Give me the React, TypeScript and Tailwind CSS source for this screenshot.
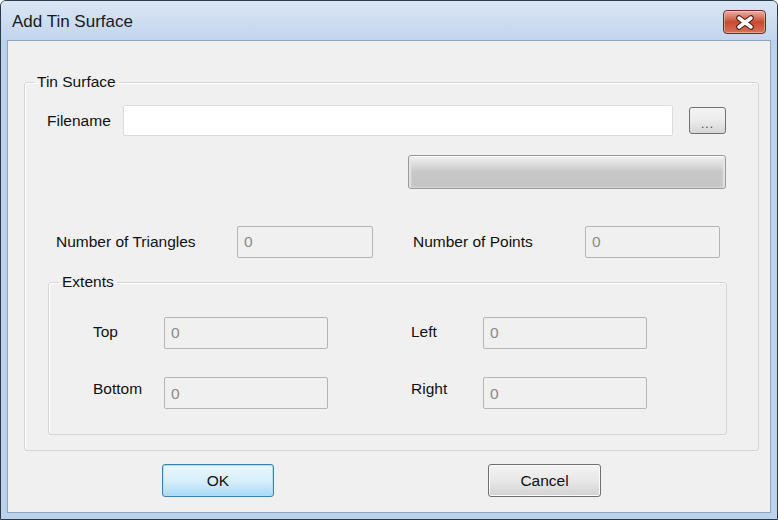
import React from 'react';

const font = { fontFamily: '"Liberation Sans", Arial, sans-serif' };

function ReadOnlyBox({ w }: { w: string }) {
  return (
    <div className={`${w} h-[32px] border border-[#b5b5b5] rounded-[2px] bg-[#f0f0f0] flex items-center pl-[6px] text-[#8a8a8a]`}>
      0
    </div>
  );
}

function CloseButton() {
  return (
    <div className="w-[43px] h-[24px] rounded-[4px] border border-[#6e2a20] bg-gradient-to-b from-[#e8b0a4] via-[#c9482f] to-[#d9735a] flex items-center justify-center shadow-[inset_0_0_0_1px_rgba(255,255,255,0.35)]">
      <svg width="20" height="15" viewBox="0 0 20 15">
        <path d="M4 3 L16 12 M16 3 L4 12" stroke="#4a1a14" strokeWidth="5.5" strokeLinecap="round" />
        <path d="M4 3 L16 12 M16 3 L4 12" stroke="#ffffff" strokeWidth="3.5" strokeLinecap="round" />
      </svg>
    </div>
  );
}

export default function App() {
  return (
    <div style={font} className="w-[778px] h-[520px] bg-[#bcd3ec] border border-[#2b3a4a] rounded-t-[6px] flex flex-col text-[15.5px] text-[#111] overflow-hidden">
      {/* title bar */}
      <div className="h-[39px] flex items-center justify-between pl-[11px] pr-[11px] bg-gradient-to-b from-[#dae6f4] to-[#c2d5ed]">
        <span className="text-[17px] text-[#1a1a1a] mt-[2px]">Add Tin Surface</span>
        <div className="mt-[3px]">
          <CloseButton />
        </div>
      </div>

      {/* client area */}
      <div className="flex-1 mx-[6px] mb-[6px] bg-[#f0f0f0] border border-[#8ba7c4] flex flex-col">
        <fieldset className="mt-[32px] ml-[16px] mr-[11px] border border-[#d5d5d5] rounded-[3px] pb-[15px] shadow-[inset_1px_1px_0_#ffffff]">
          <legend className="ml-[9px] px-[3px] leading-[18px]">Tin Surface</legend>

          <div className="flex items-center mt-[14px] pl-[22px]">
            <span className="w-[76px]">Filename</span>
            <div className="w-[550px] h-[31px] bg-white border border-[#dcdcdc] rounded-[2px]" />
            <div className="ml-[16px] w-[37px] h-[27px] rounded-[3px] border border-[#707070] bg-gradient-to-b from-[#f4f4f4] via-[#ebebeb] to-[#d6d6d6] flex items-end justify-center pb-[3px] text-[12px] leading-none tracking-[1px] text-[#444]">
              ...
            </div>
          </div>

          <div className="mt-[19px] ml-[383px] w-[318px] h-[34px] rounded-[3px] border border-[#9a9a9a] bg-gradient-to-b from-[#f2f2f2] via-[#c8c8c8] to-[#c4c4c4] shadow-[inset_0_1px_0_#ffffff,inset_2px_0_2px_#e6e6e6,inset_-2px_0_2px_#e6e6e6]" />

          <div className="flex items-center mt-[37px] pl-[31px]">
            <span className="w-[181px]">Number of Triangles</span>
            <ReadOnlyBox w="w-[136px]" />
            <span className="ml-[40px] w-[172px]">Number of Points</span>
            <ReadOnlyBox w="w-[135px]" />
          </div>

          <fieldset className="mt-[15px] ml-[23px] w-[679px] border border-[#d5d5d5] rounded-[3px] pb-[25px] shadow-[inset_1px_1px_0_#ffffff]">
            <legend className="ml-[10px] px-[3px] leading-[18px]">Extents</legend>
            <div className="flex items-center mt-[26px] pl-[44px]">
              <span className="w-[71px] mb-[2px]">Top</span>
              <ReadOnlyBox w="w-[164px]" />
              <span className="ml-[83px] w-[72px] mb-[2px]">Left</span>
              <ReadOnlyBox w="w-[164px]" />
            </div>
            <div className="flex items-center mt-[28px] pl-[44px]">
              <span className="w-[71px] mb-[9px]">Bottom</span>
              <ReadOnlyBox w="w-[164px]" />
              <span className="ml-[83px] w-[72px] mb-[9px]">Right</span>
              <ReadOnlyBox w="w-[164px]" />
            </div>
          </fieldset>
        </fieldset>

        <div className="flex mt-[13px] pl-[154px]">
          <div className="w-[112px] h-[33px] rounded-[3px] border border-[#3c7fb1] bg-gradient-to-b from-[#eaf6fd] via-[#d9f0fc] to-[#a7d9f5] shadow-[inset_0_0_0_1px_#a9e0fa] flex items-center justify-center">
            OK
          </div>
          <div className="ml-[214px] w-[113px] h-[33px] rounded-[3px] border border-[#707070] bg-gradient-to-b from-[#f4f4f4] via-[#e8e8e8] to-[#d2d2d2] shadow-[inset_0_0_0_1px_#fbfbfb] flex items-center justify-center">
            Cancel
          </div>
        </div>
      </div>
    </div>
  );
}
